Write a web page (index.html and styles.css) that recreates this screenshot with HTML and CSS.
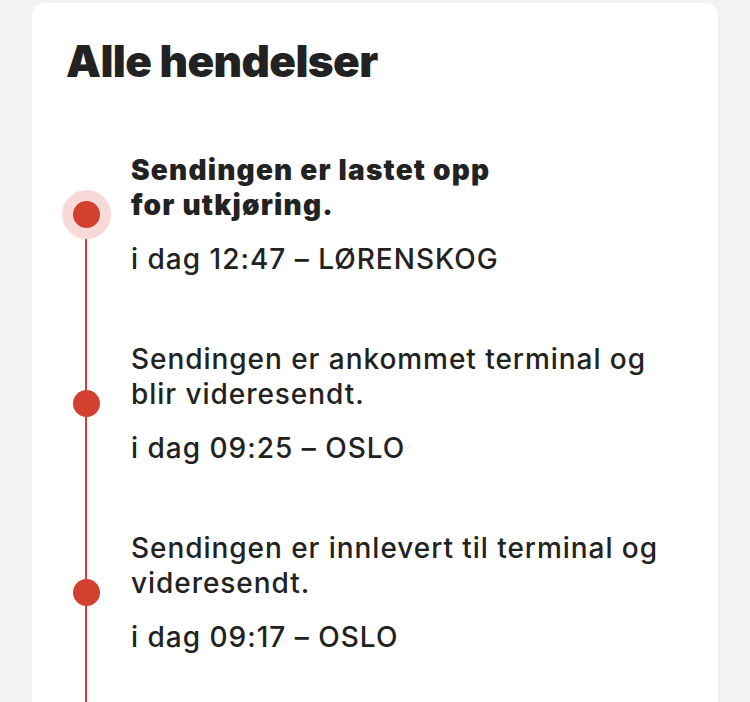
FILE: index.html
```html
<!DOCTYPE html>
<html lang="no">
<head>
<meta charset="utf-8">
<link rel="stylesheet" href="styles.css">
</head>
<body>
<main class="card">
  <h1 class="title">Alle hendelser</h1>
  <ol class="events">
    <li class="event event--current">
      <div class="marker"><span class="dot"></span></div>
      <div class="event-body">
        <p class="event-text event-text--strong">Sendingen er lastet opp for utkjøring.</p>
        <p class="event-meta">i dag 12:47 – LØRENSKOG</p>
      </div>
    </li>
    <li class="event">
      <div class="marker"><span class="dot"></span></div>
      <div class="event-body">
        <p class="event-text">Sendingen er ankommet terminal og blir videresendt.</p>
        <p class="event-meta">i dag 09:25 – OSLO</p>
      </div>
    </li>
    <li class="event event--last">
      <div class="marker"><span class="dot"></span></div>
      <div class="event-body">
        <p class="event-text">Sendingen er innlevert til terminal og videresendt.</p>
        <p class="event-meta">i dag 09:17 – OSLO</p>
      </div>
    </li>
  </ol>
</main>
</body>
</html>
```
FILE: styles.css
```css
* { box-sizing: border-box; }
html, body { margin: 0; padding: 0; }
body {
  background: #f2f2f2;
  font-family: Inter, "Noto Sans", "Liberation Sans", sans-serif;
  color: #222222;
  padding: 3px 32px 0;
  height: 702px;
  overflow: hidden;
}
.card {
  background: #ffffff;
  border-radius: 12px 12px 0 0;
  padding: 32px 34px 0;
  height: 699px;
}
.title {
  margin: 0 0 32px;
  font-size: 44px;
  line-height: 1.2;
  font-weight: 900;
  letter-spacing: -0.6px;
  color: #222222;
}
.events {
  list-style: none;
  margin: 0;
  padding: 0;
}
.event {
  display: flex;
  align-items: stretch;
}
.marker {
  width: 40px;
  flex: none;
  display: flex;
  flex-direction: column;
  align-items: center;
  padding-top: 81px;
  background: linear-gradient(#d2402f, #d2402f) no-repeat center top / 2px 100%;
}
.event--current .marker {
  background-position: center 95px;
}
.dot {
  width: 27px;
  height: 27px;
  border-radius: 50%;
  background: #d2402f;
}
.event--current .dot {
  box-shadow: 0 0 0 11px #f7dad7;
}
.event-body {
  flex: 1;
  padding: 33px 0 32px 25px;
}
.event--last .event-body {
  padding-bottom: 60px;
}
.event-text {
  margin: 0;
  font-size: 28px;
  line-height: 35px;
  font-weight: 500;
  letter-spacing: 0.95px;
}
.event-text--strong {
  font-weight: 900;
  letter-spacing: 1.2px;
  max-width: 385px;
}
.event-meta {
  margin: 19px 0 0;
  font-size: 28px;
  line-height: 35px;
  font-weight: 500;
  letter-spacing: 1px;
}
```
